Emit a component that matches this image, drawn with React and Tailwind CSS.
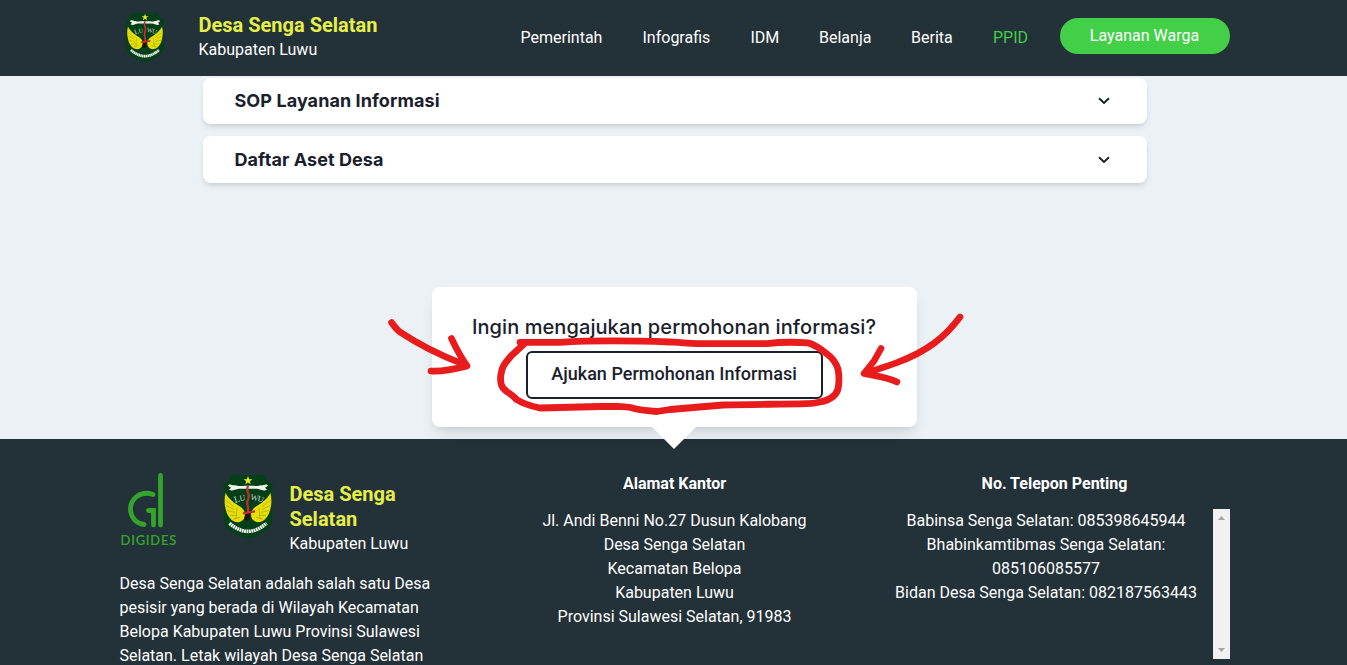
import React from "react";

function Wing() {
  return (
    <g>
      <path d="M2.500 18C1 25 1.500 31 3 36C4.500 42 9 48 15 48C20 47 22 44 22 40C22 37 20 34 17 32C12 29 6 25 2.500 18Z" fill="#e8de08" />
      <path d="M3 26L11 32M3 31L11 35M4 36L12 38M7 41L14 41M10 45L17 43M14 33L13 45" fill="none" stroke="#a3a20a" strokeWidth=".7" />
    </g>
  );
}

function Crest({ className }) {
  return (
    <svg viewBox="0 0 50 65" className={className} preserveAspectRatio="none">
      <path d="M8 0H42C43 5 46 8 49.500 9V45C49 56 36 62 25 65C14 62 1 56 .5 45V9C4 8 7 5 8 0Z" fill="#034019" />
      <Wing />
      <g transform="translate(50 0) scale(-1 1)"><Wing /></g>
      <path d="M5 11C7 8 9 11 12 10.500C16 12 20 10.500 25 11C30 10.500 34 12 38 10.500C41 11 43 8 45 11L42 13L44 15C41 17 38 14.500 34 14H16C12 14.500 9 17 6 15L8 13Z" fill="#f3f5ed" />
      <path d="M25 1L26.200 4.300H29.500L26.800 6.400L27.800 9.500L25 7.600L22.200 9.500L23.200 6.400L20.500 4.300H23.800Z" fill="#eee51b" />
      <g fill="#c9d6c6" fontFamily="Liberation Serif, serif">
        <text x="12" y="28.500" transform="rotate(-17 12 28.500)" fontSize="9.500">L</text>
        <text x="17" y="26.500" transform="rotate(-10 17 26.500)" fontSize="8">U</text>
        <text x="27" y="25" transform="rotate(12 27 25)" fontSize="8.500">W</text>
        <text x="34" y="26.500" transform="rotate(17 34 26.500)" fontSize="8.500">U</text>
      </g>
      <path d="M23 37L21 45Q24 48 27 45L26.500 37Z" fill="#17170f" />
      <path d="M25 11Q23.500 15 25 18T25 25T25 32V38M20 39L32 37" fill="none" stroke="#c92d30" strokeWidth="2.2" />
      <path d="M6.500 49Q25 65.500 43.500 49" fill="none" stroke="#f2f5ec" strokeWidth="3.600" strokeDasharray="1.9 .5" />
    </svg>
  );
}

function Chevron() {
  return (
    <svg viewBox="0 0 12 8" className="h-2 w-3">
      <path d="M1 1.200L6 6L11 1.200" fill="none" stroke="#1a202c" strokeWidth="1.900" />
    </svg>
  );
}

function Panel({ title, className }) {
  return (
    <div className={`flex items-center justify-between rounded-lg bg-white pr-[37.500px] pl-[31.500px] shadow-md ${className}`}>
      <h2 className="font-['Inter',sans-serif] text-lg leading-7 font-bold tracking-[.08px] text-[#1a202c]">{title}</h2>
      <Chevron />
    </div>
  );
}

function Annotations() {
  return (
    <svg viewBox="0 0 600 160" className="pointer-events-none absolute top-[300px] left-[380px] z-20 h-40 w-[600px]" fill="none" stroke="#e81c1c" strokeLinecap="round" strokeLinejoin="round" strokeWidth="6.600">
      <path d="M11.500 22.500C15 27 17 30 20 32C32 40 49 51 83 64M71.500 38.500C75 46 80 56 87 66C75 69 62 72 51 71" />
      <path d="M140 42.300H180C210 40.500 260 41 290 42C305 43 315 43.700 322 43.700H387C400 42 415 42 428 42.800C435 45 441 49 447 54C453 58 456 63 458 69C459.500 77 459 84 458 89C456 96 450 100 440 102C434 103.500 430 103.700 427 103.700C400 104.500 370 104 343 105L290 109.500L277 111.500C266 110.500 255 109 252 107.800C246 106.500 242 106.700 238 106.500H220L160 108C150 106 142 103 136.500 99.500C132 94 128 93 125 90C120 86 120 80 121 74C122 66 126 62 131 56L144 44" strokeWidth="6.800" />
      <path d="M580 17C565 37 548 51 516 63C508 66 498 69 486 73M501 48.500L494 61L484 73.500C495 76 506 77 517 82" />
    </svg>
  );
}

function DigidesLogo() {
  return (
    <div className="w-[58px] text-[#33a52c]">
      <svg viewBox="0 0 58 58" className="block h-[58px] w-[58px]" fill="none" stroke="currentColor" strokeWidth="4.800" strokeLinecap="round">
        <path d="M40.500 2.500V52M33 21.500C20 17 10.500 26 10.500 36C10.500 44 16 50.500 24 51.500" />
        <path d="M28.500 37.500H33.500V52" />
      </svg>
      <div className="mt-[2px] -mr-1 ml-px font-['Lato',sans-serif] text-[13px] leading-[14px] font-semibold tracking-[.75px]">DIGIDES</div>
    </div>
  );
}

const nav = [
  ["Pemerintah", "w-[122px]"],
  ["Infografis", "w-[108px]"],
  ["IDM", "w-[68.500px]"],
  ["Belanja", "w-[92px]"],
  ["Berita", "w-[82px]"],
  ["PPID", "w-[66.500px] text-[#42ce48]"],
];

export default function App() {
  return (
    <div className="relative h-[665px] w-full overflow-hidden bg-[#ebf1f5] font-['Roboto',sans-serif] text-base">
      <header className="flex h-[76px] bg-[#233138] pl-[126px] text-white">
        <Crest className="mt-[13px] h-[49px] w-[38px] shrink-0" />
        <div className="ml-[34.500px] w-[322px] shrink-0 pt-[13px]">
          <div className="text-xl leading-[25px] font-bold text-[#e5ef48]">Desa Senga Selatan</div>
          <div className="leading-6">Kabupaten Luwu</div>
        </div>
        <nav className="flex h-[75px] items-center">
          {nav.map(([label, className]) => <a key={label} className={`shrink-0 ${className}`}>{label}</a>)}
        </nav>
        <button className="mt-[18px] flex h-9 w-[170px] items-center justify-center rounded-full bg-[#43d048] leading-6">Layanan Warga</button>
      </header>

      <main className="flex h-[363px] flex-col items-center pt-0.5 pl-[3px]">
        <div className="w-[944px]">
          <Panel title="SOP Layanan Informasi" className="h-[46px]" />
          <Panel title="Daftar Aset Desa" className="mt-3 h-[47px]" />
        </div>
        <section className="relative z-10 mt-[104px] mr-[2px] flex h-[140px] w-[485px] shrink-0 flex-col items-center rounded-lg bg-white pt-6 shadow-lg">
          <h2 className="font-['Inter',sans-serif] text-xl leading-8 font-medium tracking-[.085px] whitespace-nowrap text-[#1a202c]">Ingin mengajukan permohonan informasi?</h2>
          <button className="mt-2 h-12 w-[297px] rounded-md border-2 border-[#1a202c] pb-0.5 text-lg font-medium tracking-[.02px] whitespace-nowrap text-[#1a202c]">Ajukan Permohonan Informasi</button>
          <svg viewBox="0 0 46 23" className="absolute top-[139px] left-[219px] h-[23px] w-[46px]"><path d="M0 0H46L23 23Z" fill="white" /></svg>
        </section>
      </main>

      <footer className="flex h-[226px] bg-[#233138] pl-[119.500px] text-white">
        <section className="w-[370.500px] shrink-0 pt-[34px]">
          <div className="flex h-[83px]">
            <DigidesLogo />
            <Crest className="mt-0.5 ml-[45px] h-[64px] w-[50px] shrink-0" />
            <div className="ml-[17px] w-[140px] pt-[9px]">
              <div className="text-xl leading-[25px] font-bold text-[#e5ef48]">Desa Senga<br />Selatan</div>
              <div className="leading-6">Kabupaten Luwu</div>
            </div>
          </div>
          <p className="mt-4 leading-6 whitespace-nowrap">Desa Senga Selatan adalah salah satu Desa<br />pesisir yang berada di Wilayah Kecamatan<br />Belopa Kabupaten Luwu Provinsi Sulawesi<br />Selatan. Letak wilayah Desa Senga Selatan</p>
        </section>
        <section className="w-[369px] shrink-0 pt-[33px] text-center">
          <h3 className="leading-6 font-bold">Alamat Kantor</h3>
          <p className="mt-[13px] leading-6">Jl. Andi Benni No.27 Dusun Kalobang<br />Desa Senga Selatan<br />Kecamatan Belopa<br />Kabupaten Luwu<br />Provinsi Sulawesi Selatan, 91983</p>
        </section>
        <section className="ml-5 w-[351px] shrink-0 pt-[33px] text-center">
          <h3 className="leading-6 font-bold">No. Telepon Penting</h3>
          <div className="mt-[13px] flex">
            <p className="w-[334px] leading-6">Babinsa Senga Selatan: 085398645944<br />Bhabinkamtibmas Senga Selatan:<br />085106085577<br />Bidan Desa Senga Selatan: 082187563443</p>
            <div className="flex h-[150px] w-[17px] shrink-0 flex-col items-center justify-between bg-[#f1f1f1] py-[7px]">
              <svg viewBox="0 0 7 4" className="h-1 w-[7px]"><path d="M0 4L3.500 0L7 4Z" fill="#a3a3a3" /></svg>
              <svg viewBox="0 0 7 4" className="h-1 w-[7px]"><path d="M0 0H7L3.500 4Z" fill="#a3a3a3" /></svg>
            </div>
          </div>
        </section>
      </footer>
      <Annotations />
    </div>
  );
}
